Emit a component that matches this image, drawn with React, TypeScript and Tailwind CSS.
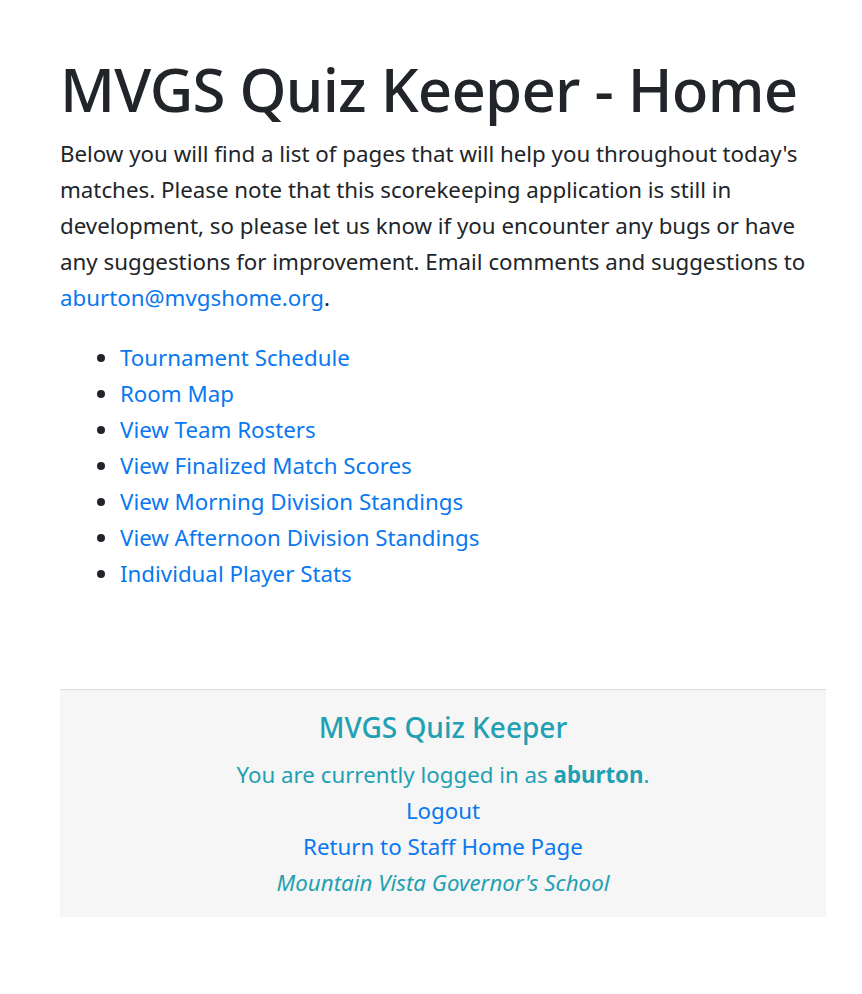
export default function App() {
  const links = [
    "Tournament Schedule",
    "Room Map",
    "View Team Rosters",
    "View Finalized Match Scores",
    "View Morning Division Standings",
    "View Afternoon Division Standings",
    "Individual Player Stats",
  ];

  return (
    <div
      className="min-h-[994px] bg-white text-[#212529] text-[22.3px] leading-[36px]"
      style={{ fontFamily: '"Noto Sans", "Open Sans", sans-serif' }}
    >
      <div className="ml-[60px] w-[766px] pt-[46px]">
        <h1 className="text-[60px] leading-[86px] font-medium tracking-[-0.8px]">
          MVGS Quiz Keeper - Home
        </h1>
        <p className="mt-[4px] mb-[24px]">
          Below you will find a list of pages that will help you throughout today's matches. Please
          note that this scorekeeping application is still in development, so please let us know if
          you encounter any bugs or have any suggestions for improvement. Email comments and
          suggestions to{" "}
          <a href="#" className="text-[#0a78f0]">
            aburton@mvgshome.org
          </a>
          .
        </p>
        <ul className="list-disc pl-[60px]">
          {links.map((l) => (
            <li key={l}>
              <a href="#" className="text-[#0a78f0]">
                {l}
              </a>
            </li>
          ))}
        </ul>

        <footer className="mt-[97px] border-t border-[#dcdcdc] bg-[#f6f6f6] pt-[19px] pb-[16px] text-center text-[#1fa0b3]">
          <h4 className="text-[28px] leading-[36px] font-medium mb-[12px]">MVGS Quiz Keeper</h4>
          <div>
            You are currently logged in as <b className="font-bold">aburton</b>.
          </div>
          <div>
            <a href="#" className="text-[#0a78f0]">
              Logout
            </a>
          </div>
          <div>
            <a href="#" className="text-[#0a78f0]">
              Return to Staff Home Page
            </a>
          </div>
          <div className="italic">Mountain Vista Governor's School</div>
        </footer>
      </div>
    </div>
  );
}
